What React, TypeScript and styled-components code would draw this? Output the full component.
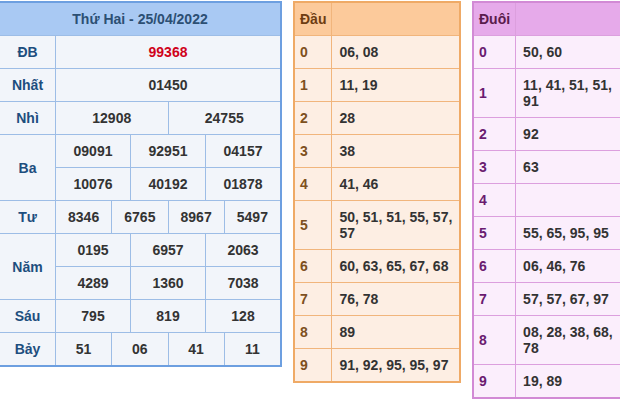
import React from "react";
import styled, { createGlobalStyle } from "styled-components";

const Global = createGlobalStyle`
  html, body { margin: 0; padding: 0; background: #ffffff; overflow: hidden; }
  body { font-family: "Liberation Sans", Arial, sans-serif; }
`;

const Page = styled.div`
  display: flex;
  align-items: flex-start;
  gap: 11px;
  padding-top: 1px;
  margin-left: -2px;
  width: 700px;
`;

const ResultGrid = styled.div`
  width: 284px;
  box-sizing: border-box;
  display: grid;
  grid-template-columns: 55px repeat(12, 1fr);
  grid-auto-rows: 32px;
  gap: 1px;
  background: #9dbde6;
  border: 2px solid #6d9fe0;
  font: bold 14px/16px "Liberation Sans", Arial, sans-serif;
  flex-shrink: 0;
`;

const Title = styled.div`
  grid-column: 1 / -1;
  background: #a9c9f3;
  color: #2c4f73;
  display: flex;
  align-items: center;
  justify-content: center;
`;

const Label = styled.div<{ $rows?: number }>`
  grid-row: span ${(p) => p.$rows ?? 1};
  background: #f2f5fa;
  color: #1d4e7e;
  display: flex;
  align-items: center;
  justify-content: center;
`;

const Num = styled.div<{ $span: number; $red?: boolean }>`
  grid-column: span ${(p) => p.$span};
  background: #f2f5fa;
  color: ${(p) => (p.$red ? "#d0021b" : "#333333")};
  display: flex;
  align-items: center;
  justify-content: center;
`;

type Theme = {
  outer: string;
  line: string;
  head: string;
  cell: string;
  headText: string;
  keyText: string;
};

const orange: Theme = {
  outer: "#efaa66",
  line: "#f1b57c",
  head: "#fcca9b",
  cell: "#fdeee3",
  headText: "#6e3d12",
  keyText: "#7d5020",
};

const purple: Theme = {
  outer: "#d28ad5",
  line: "#dc9fde",
  head: "#e6aaea",
  cell: "#fbeefc",
  headText: "#5a1c4c",
  keyText: "#6a1b70",
};

const LotoGrid = styled.div<{ $t: Theme; $w: number }>`
  width: ${(p) => p.$w}px;
  box-sizing: border-box;
  display: grid;
  grid-template-columns: max-content minmax(0, 1fr);
  grid-auto-rows: minmax(32px, auto);
  gap: 1px;
  background: ${(p) => p.$t.line};
  border: 2px solid ${(p) => p.$t.outer};
  font: bold 14px/16px "Liberation Sans", Arial, sans-serif;
  flex-shrink: 0;
`;

const HeadCell = styled.div<{ $t: Theme }>`
  background: ${(p) => p.$t.head};
  color: ${(p) => p.$t.headText};
  padding: 8px 5px;
  display: flex;
  align-items: center;
`;

const KeyCell = styled.div<{ $t: Theme }>`
  background: ${(p) => p.$t.cell};
  color: ${(p) => p.$t.keyText};
  padding: 8px 5px;
  display: flex;
  align-items: center;
`;

const ValCell = styled.div<{ $t: Theme }>`
  background: ${(p) => p.$t.cell};
  color: #333333;
  padding: 8px 4px 8px 7px;
  display: flex;
  align-items: center;
`;

const rows: { label: string; groups: string[][] }[] = [
  { label: "Nhất", groups: [["01450"]] },
  { label: "Nhì", groups: [["12908", "24755"]] },
  { label: "Ba", groups: [["09091", "92951", "04157"], ["10076", "40192", "01878"]] },
  { label: "Tư", groups: [["8346", "6765", "8967", "5497"]] },
  { label: "Năm", groups: [["0195", "6957", "2063"], ["4289", "1360", "7038"]] },
  { label: "Sáu", groups: [["795", "819", "128"]] },
  { label: "Bảy", groups: [["51", "06", "41", "11"]] },
];

const dau = [
  "06, 08",
  "11, 19",
  "28",
  "38",
  "41, 46",
  "50, 51, 51, 55, 57, 57",
  "60, 63, 65, 67, 68",
  "76, 78",
  "89",
  "91, 92, 95, 95, 97",
];

const duoi = [
  "50, 60",
  "11, 41, 51, 51, 91",
  "92",
  "63",
  "",
  "55, 65, 95, 95",
  "06, 46, 76",
  "57, 57, 67, 97",
  "08, 28, 38, 68, 78",
  "19, 89",
];

function Loto({ title, data, t, w }: { title: string; data: string[]; t: Theme; w: number }) {
  return (
    <LotoGrid $t={t} $w={w}>
      <HeadCell $t={t}>{title}</HeadCell>
      <HeadCell $t={t} />
      {data.map((v, i) => (
        <React.Fragment key={i}>
          <KeyCell $t={t}>{i}</KeyCell>
          <ValCell $t={t}>{v}</ValCell>
        </React.Fragment>
      ))}
    </LotoGrid>
  );
}

export default function App() {
  return (
    <>
      <Global />
      <Page>
        <ResultGrid>
          <Title>Thứ Hai - 25/04/2022</Title>
          <Label>ĐB</Label>
          <Num $span={12} $red>
            99368
          </Num>
          {rows.map((r) => (
            <React.Fragment key={r.label}>
              <Label $rows={r.groups.length}>{r.label}</Label>
              {r.groups.flat().map((n, i) => (
                <Num key={i} $span={12 / r.groups[0].length}>
                  {n}
                </Num>
              ))}
            </React.Fragment>
          ))}
        </ResultGrid>
        <Loto title="Đầu" data={dau} t={orange} w={168} />
        <Loto title="Đuôi" data={duoi} t={purple} w={160} />
      </Page>
    </>
  );
}
